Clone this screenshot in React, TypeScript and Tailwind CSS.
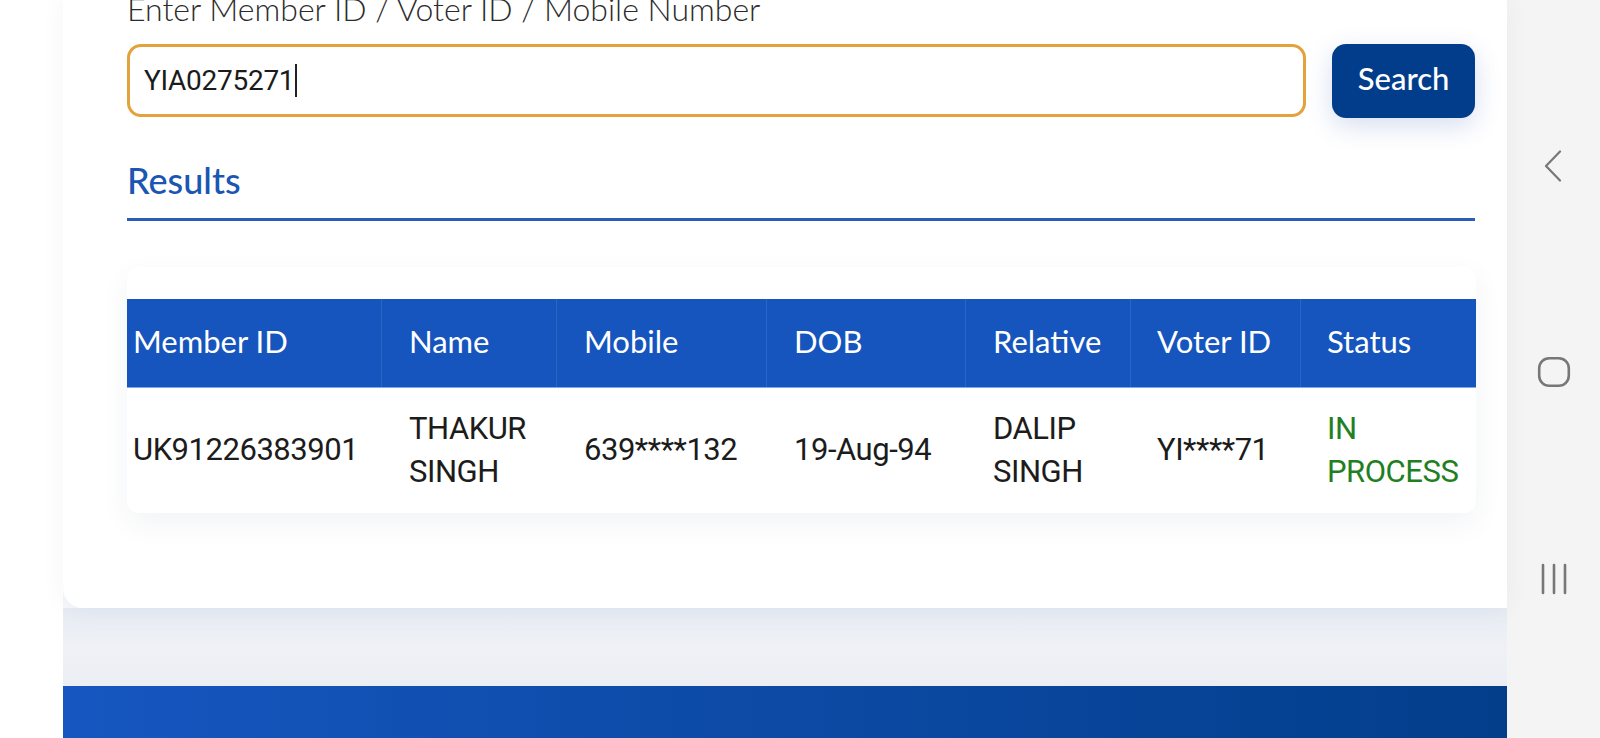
import React from "react";

const cols = [
  { h: "Member ID", pl: "pl-[6px]" },
  { h: "Name", pl: "pl-[27px]" },
  { h: "Mobile", pl: "pl-[27px]" },
  { h: "DOB", pl: "pl-[27px]" },
  { h: "Relative", pl: "pl-[27px]" },
  { h: "Voter ID", pl: "pl-[26px]" },
  { h: "Status", pl: "pl-[26px]" },
];

const row: React.ReactNode[] = [
  "UK91226383901",
  <>THAKUR<br />SINGH</>,
  "639****132",
  "19-Aug-94",
  <>DALIP<br />SINGH</>,
  "YI****71",
  <span className="text-[#1f8022]">IN<br />PROCESS</span>,
];

export default function App() {
  return (
    <div className="w-[1600px] h-[738px] flex overflow-hidden bg-white">
      {/* display cutout area */}
      <div className="w-[63px] shrink-0 bg-white" />

      {/* web view */}
      <div className="w-[1444px] shrink-0 flex flex-col bg-[#f5f7fa]">
        <div className="bg-white rounded-bl-[20px] pl-[64px] pr-[32px] pb-[95px] shadow-[0_0_24px_rgba(30,50,90,0.05)] relative z-10">
          <div className="-mt-[7px] h-[32px] leading-[32px] text-[32px] font-light text-[#2b2b2b] font-['Lato',sans-serif] whitespace-nowrap">
            Enter Member ID / Voter ID / Mobile Number
          </div>

          <div className="mt-[19px] flex items-start gap-[26px]">
            <div className="w-[1180px] h-[73px] border-[3px] border-[#e3a23b] rounded-[14px] bg-white flex items-center pl-[14px] font-['Roboto',sans-serif] text-[28px] text-[#1b1b1b]">
              <span className="tracking-[-0.01em]">YIA0275271</span>
              <span className="inline-block w-[1.5px] h-[33px] bg-[#222] ml-[1px]" />
            </div>
            <button className="w-[143px] h-[74px] pb-[5px] rounded-[14px] bg-[#023d8b] text-white font-['Lato',sans-serif] font-medium text-[31px] shadow-[0_8px_26px_rgba(25,70,170,0.18)]">
              Search
            </button>
          </div>

          <div className="mt-[44px] h-[36px] leading-[36px] text-[36px] text-[#1b56b3] font-['Lato',sans-serif] font-medium">
            Results
          </div>
          <div className="mt-[20px] w-[1348px] h-[3px] bg-[#2a5cb8]" />

          <div className="mt-[46px] w-[1349px] bg-white rounded-[12px] pt-[32px] shadow-[0_10px_30px_rgba(30,50,90,0.06)] overflow-hidden">
            <div className="grid grid-cols-[255px_175px_210px_199px_165px_170px_1fr] h-[89px] bg-[#1655be] text-white font-['Lato',sans-serif] text-[31px] border-b border-[#7fa9e6]">
              {cols.map((c, i) => (
                <div
                  key={c.h}
                  className={`flex items-center pb-[4px] ${c.pl} ${i < cols.length - 1 ? "border-r border-[#2b66c6]" : ""}`}
                >
                  {c.h}
                </div>
              ))}
            </div>
            <div className="grid grid-cols-[255px_175px_210px_199px_165px_170px_1fr] h-[125px] pb-[2px] bg-white text-[#1c1c1c] font-['Roboto',sans-serif] text-[31px] leading-[43px] tracking-[-0.015em]">
              {row.map((v, i) => (
                <div key={i} className={`flex items-center ${cols[i].pl}`}>
                  <div>{v}</div>
                </div>
              ))}
            </div>
          </div>
        </div>

        <div className="h-[78px] bg-linear-to-b from-[#e6ebf3] via-[#eff1f5] to-[#ebeef2]" />
        <div className="flex-1 bg-linear-to-r from-[#1656c0] to-[#033e8b]" />
      </div>

      {/* android nav bar */}
      <div className="w-[93px] shrink-0 bg-[#f4f4f4] flex flex-col items-center pt-[150px]">
        <svg width="20" height="32" viewBox="0 0 20 32" className="ml-[-1px]">
          <path d="M17 1.5 L3 16 L17 30.5" fill="none" stroke="#777" strokeWidth="2.2" strokeLinecap="round" strokeLinejoin="round" />
        </svg>
        <svg width="34" height="32" viewBox="0 0 34 32" className="mt-[174px]">
          <rect x="2.2" y="2.2" width="29.6" height="27.6" rx="10" fill="none" stroke="#777" strokeWidth="2.6" />
        </svg>
        <svg width="28" height="32" viewBox="0 0 28 32" className="mt-[175px]">
          <path d="M3 2 V30 M14 2 V30 M25 2 V30" fill="none" stroke="#777" strokeWidth="2.6" strokeLinecap="round" />
        </svg>
      </div>
    </div>
  );
}
